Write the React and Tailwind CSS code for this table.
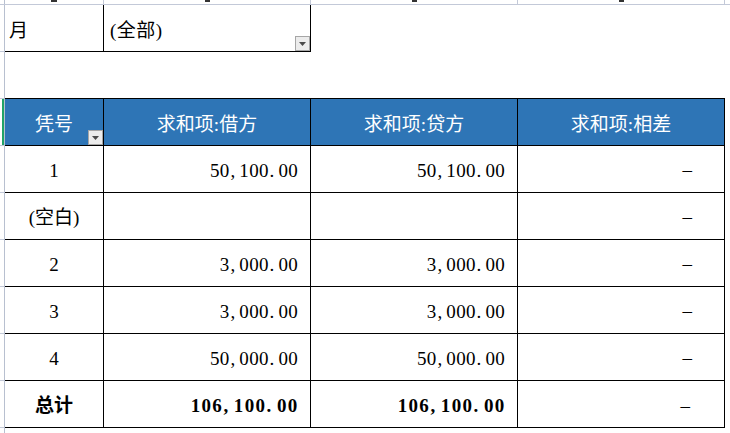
import React from "react";

const FONT = "font-['Liberation_Serif','Noto_Sans_CJK_SC',serif]";

function Num({ s, bold }) {
  return (
    <span className="inline-flex">
      {s.split("").map((c, i) => {
        const punct = c === "," || c === ".";
        const w = bold ? "w-[10.8px]" : "w-[9.8px]";
        return (
          <span
            key={i}
            className={`inline-block ${w} ${punct ? "text-left pl-[1px]" : "text-center"}`}
          >
            {c}
          </span>
        );
      })}
    </span>
  );
}

function DropBtn({ className }) {
  return (
    <div
      className={`absolute w-[15px] h-[15px] bg-[#ececec] border border-[#a6a6a6] flex items-center justify-center ${className}`}
    >
      <svg width="7" height="4" viewBox="0 0 7 4">
        <path d="M0 0 H7 L3.5 4 Z" fill="#4a4a4a" />
      </svg>
    </div>
  );
}

const rows = [
  { k: "1", a: "50,100.00", b: "50,100.00" },
  { k: "(空白)", a: "", b: "" },
  { k: "2", a: "3,000.00", b: "3,000.00" },
  { k: "3", a: "3,000.00", b: "3,000.00" },
  { k: "4", a: "50,000.00", b: "50,000.00" },
];

export default function App() {
  return (
    <div className={`w-[730px] h-[433px] overflow-hidden bg-white text-black text-[19px] leading-[22px] ${FONT} flex flex-col`}>
      {/* column header strip */}
      <div className="flex h-[5px] shrink-0 border-b border-[#c3c9d8]">
        <div className="w-[5px] border-r border-[#b8c0d0]" />
        <div className="w-[99px] border-r border-[#c3c9d8] flex justify-center">
          <div className="w-[6px] h-[2px] bg-[#333]" />
        </div>
        <div className="w-[207px] border-r border-[#c3c9d8] flex justify-center">
          <div className="w-[5px] h-[2px] bg-[#333]" />
        </div>
        <div className="w-[207px] border-r border-[#c3c9d8] flex justify-center">
          <div className="w-[5px] h-[2px] bg-[#333]" />
        </div>
        <div className="w-[207px] border-r border-[#c3c9d8] flex justify-center">
          <div className="w-[5px] h-[2px] bg-[#333]" />
        </div>
        <div className="flex-1" />
      </div>

      <div className="flex flex-1">
        {/* row header strip */}
        <div className="w-[5px] shrink-0 border-r border-[#b8c0d0] flex flex-col">
          <div className="h-[47px] border-b border-[#c3c9d8]" />
          <div className="h-[47px] border-b border-[#c3c9d8]" />
          <div className="h-[47px] border-b border-[#c3c9d8] flex justify-end">
            <div className="w-[2px] h-full bg-[#21a366]" />
          </div>
          <div className="h-[47px] border-b border-[#c3c9d8]" />
          <div className="h-[47px] border-b border-[#c3c9d8]" />
          <div className="h-[47px] border-b border-[#c3c9d8]" />
          <div className="h-[47px] border-b border-[#c3c9d8]" />
          <div className="h-[47px] border-b border-[#c3c9d8]" />
          <div className="h-[47px] border-b border-[#c3c9d8]" />
        </div>

        {/* sheet */}
        <div className="flex flex-col w-[725px]">
          {/* filter row */}
          <div className="flex h-[47px]">
            <div className="w-[99px] border-r border-b border-black flex items-center pl-[4px] pt-[5px]">
              月
            </div>
            <div className="relative w-[207px] border-r border-b border-black flex items-center pl-[6px] pt-[5px] tracking-[0.5px]">
              (全部)
              <DropBtn className="right-[0px] bottom-[0px]" />
            </div>
          </div>
          <div className="h-[46px]" />

          {/* pivot table */}
          <div className="w-[720px] border-t border-black flex flex-col">
            <div className="flex h-[47px] border-b border-black bg-[#2e75b6] text-white">
              <div className="relative w-[99px] border-r border-black flex items-center justify-center pt-[5px]">
                凭号
                <DropBtn className="right-[0px] bottom-[0px]" />
              </div>
              <div className="w-[207px] border-r border-black flex items-center justify-center pt-[5px]">
                求和项:借方
              </div>
              <div className="w-[207px] border-r border-black flex items-center justify-center pt-[5px]">
                求和项:贷方
              </div>
              <div className="w-[207px] border-r border-black flex items-center justify-center pt-[5px]">
                求和项:相差
              </div>
            </div>

            {rows.map((r, i) => (
              <div key={i} className="flex h-[47px] border-b border-black">
                <div className="w-[99px] border-r border-black flex items-center justify-center pt-[4px]">
                  {r.k}
                </div>
                <div className="w-[207px] border-r border-black flex items-center justify-end pr-[12px] pt-[4px]">
                  {r.a && <Num s={r.a} />}
                </div>
                <div className="w-[207px] border-r border-black flex items-center justify-end pr-[12px] pt-[4px]">
                  {r.b && <Num s={r.b} />}
                </div>
                <div className="w-[207px] border-r border-black flex items-center justify-end pr-[32px] pt-[2px]">
                  –
                </div>
              </div>
            ))}

            <div className="flex h-[47px] border-b border-black font-bold">
              <div className="w-[99px] border-r border-black flex items-center justify-center pt-[4px]">
                总计
              </div>
              <div className="w-[207px] border-r border-black flex items-center justify-end pr-[12px] pt-[4px]">
                <Num s="106,100.00" bold />
              </div>
              <div className="w-[207px] border-r border-black flex items-center justify-end pr-[12px] pt-[4px]">
                <Num s="106,100.00" bold />
              </div>
              <div className="w-[207px] border-r border-black flex items-center justify-end pr-[34px] pt-[4px] font-normal">
                –
              </div>
            </div>
          </div>
        </div>
      </div>
    </div>
  );
}
